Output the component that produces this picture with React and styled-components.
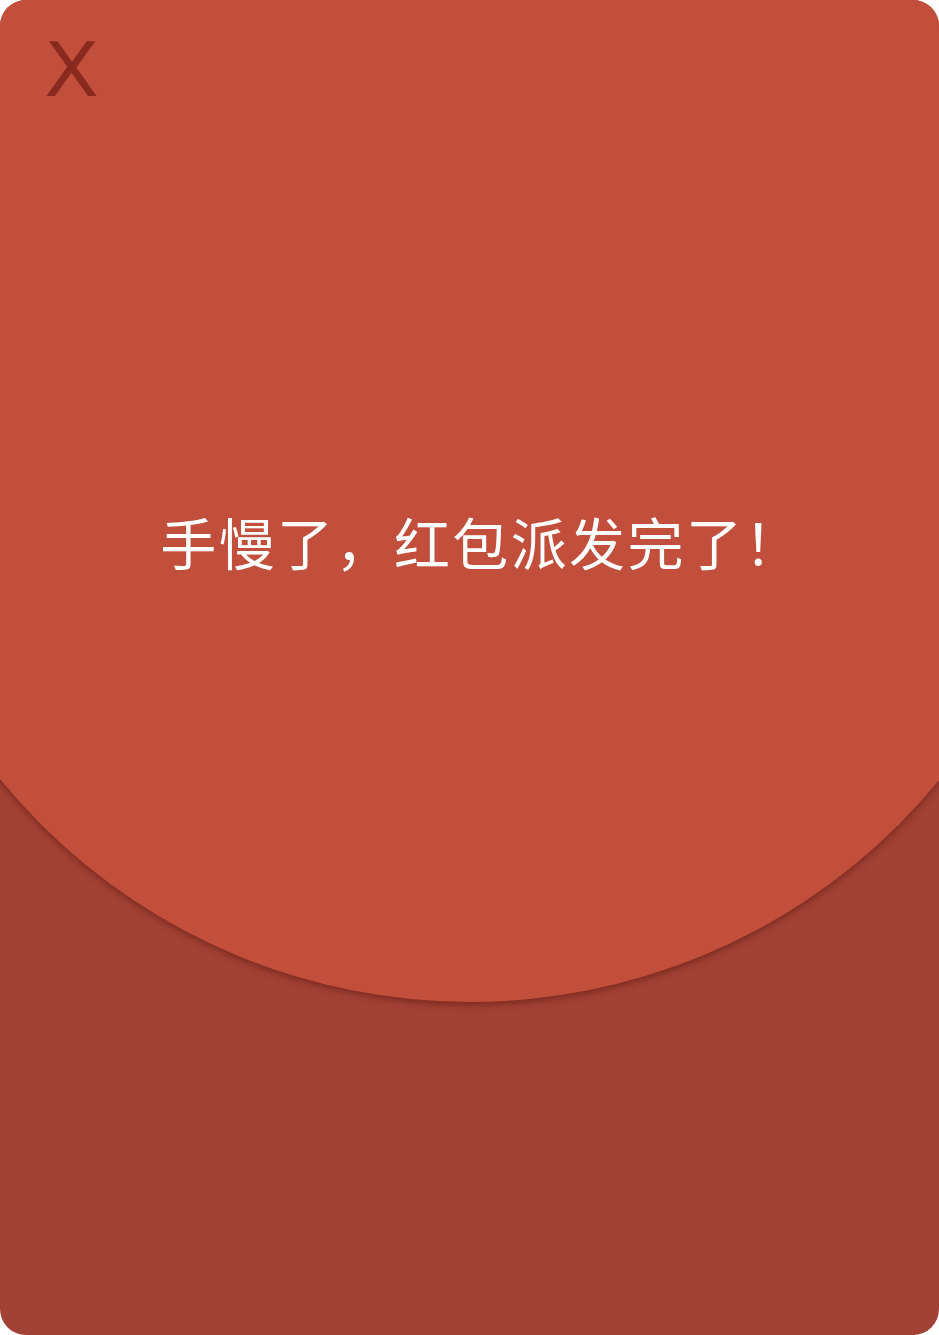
import React from 'react';
import styled, { createGlobalStyle } from 'styled-components';

const GlobalStyle = createGlobalStyle`
  html, body {
    margin: 0;
    padding: 0;
    background: #ffffff;
  }
  * {
    box-sizing: border-box;
  }
`;

const Card = styled.div`
  width: 939px;
  height: 1335px;
  border-radius: 26px;
  overflow: hidden;
  background-color: #a24135;
`;

const Cover = styled.div`
  width: 1214px;
  height: 1002px;
  margin-left: -137.5px;
  padding: 40px 137.5px 0;
  background-color: #c14f3c;
  border-bottom-left-radius: 607px 607px;
  border-bottom-right-radius: 607px 607px;
  box-shadow: 0 3px 6px rgba(90, 20, 10, 0.5);
  display: flex;
  flex-direction: column;
`;

const CloseButton = styled.div`
  align-self: flex-start;
  margin-left: 44px;
  font-family: 'DejaVu Sans', sans-serif;
  font-size: 75px;
  line-height: 60px;
  color: #8a2a1e;
  transform: scaleX(1.07);
  transform-origin: left center;
  cursor: pointer;
`;

const Message = styled.div`
  margin-top: 406px;
  padding-left: 24px;
  text-align: center;
  font-family: 'Noto Sans CJK SC', sans-serif;
  font-size: 56px;
  line-height: 70px;
  letter-spacing: 2.4px;
  text-spacing-trim: space-all;
  color: #ffffff;
`;

export default function App() {
  return (
    <>
      <GlobalStyle />
      <Card>
        <Cover>
          <CloseButton>X</CloseButton>
          <Message>手慢了，红包派发完了！</Message>
        </Cover>
      </Card>
    </>
  );
}
